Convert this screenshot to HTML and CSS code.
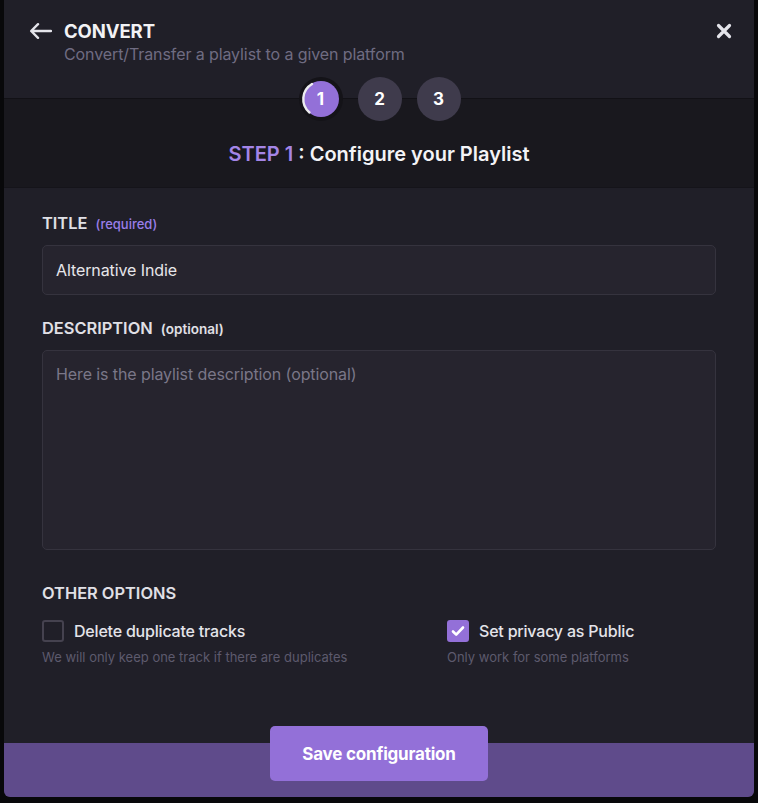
FILE: index.html
```html
<!DOCTYPE html>
<html>
<head>
<meta charset="utf-8">
<link rel="stylesheet" href="styles.css">
</head>
<body>
<div class="modal">
  <header class="head">
    <svg class="back" width="24" height="24" viewBox="0 0 24 24"><path d="M23 12H3.5M10 5.2L3.2 12l6.8 6.8" fill="none" stroke="#e4e4ea" stroke-width="2.4" stroke-linecap="round" stroke-linejoin="round"/></svg>
    <div class="titles">
      <div class="h-title">CONVERT</div>
      <div class="h-sub">Convert/Transfer a playlist to a given platform</div>
    </div>
    <svg class="close" width="16" height="16" viewBox="0 0 16 16"><path d="M2.5 2.5l11 11M13.5 2.5l-11 11" stroke="#e4e4ea" stroke-width="3.2" stroke-linecap="round"/></svg>
  </header>
  <section class="stepband">
    <div class="steps">
      <div class="step active"><span class="dot">1</span>
        <svg class="arc" width="44" height="44" viewBox="0 0 44 44"><path d="M13 7 A17.5 17.5 0 0 0 10.5 35.5" fill="none" stroke="#ececf0" stroke-width="2.4" stroke-linecap="round"/></svg>
      </div>
      <div class="step">2</div>
      <div class="step">3</div>
    </div>
    <h2 class="steptitle"><span class="accent">STEP 1</span> : Configure your Playlist</h2>
  </section>
  <main class="form">
    <label class="lbl">TITLE <span class="req">(required)</span></label>
    <div class="input">Alternative Indie</div>
    <label class="lbl lbl2">DESCRIPTION <span class="opt">(optional)</span></label>
    <div class="textarea">Here is the playlist description (optional)</div>
    <div class="lbl lbl3">OTHER OPTIONS</div>
    <div class="options">
      <div class="option">
        <div class="check-row"><span class="box"></span><span class="ctext">Delete duplicate tracks</span></div>
        <div class="hint">We will only keep one track if there are duplicates</div>
      </div>
      <div class="option">
        <div class="check-row"><span class="box checked"><svg width="14" height="12" viewBox="0 0 14 12"><path d="M2 6.5l3.2 3.2L12 2.5" fill="none" stroke="#fff" stroke-width="2.6" stroke-linecap="round" stroke-linejoin="round"/></svg></span><span class="ctext">Set privacy as Public</span></div>
        <div class="hint">Only work for some platforms</div>
      </div>
    </div>
  </main>
  <footer class="foot">
    <button class="save">Save configuration</button>
  </footer>
</div>
</body>
</html>
```
FILE: styles.css
```css
* { box-sizing: border-box; }
html, body { margin: 0; padding: 0; }
body {
  background: #08080a;
  font-family: Inter, "Noto Sans", sans-serif;
  width: 758px;
  height: 803px;
  overflow: hidden;
}
.modal {
  margin-left: 4px;
  width: 750px;
  height: 797px;
  background: #201f28;
  border-radius: 0 0 6px 6px;
  overflow: hidden;
  display: flex;
  flex-direction: column;
}
.head {
  height: 99px;
  display: flex;
  align-items: flex-start;
  padding: 19px 22px 0 24px;
  border-bottom: 1px solid #121116;
  flex-shrink: 0;
}
.back { flex-shrink: 0; }
.titles { margin-left: 12px; flex: 1; }
.h-title {
  color: #f2f2f5;
  font-size: 18.5px;
  font-weight: 700;
  line-height: 24px;
  letter-spacing: -0.1px;
}
.h-sub {
  color: #6f6c82;
  font-size: 16px;
  line-height: 22px;
  letter-spacing: -0.1px;
}
.close { margin-top: 4px; }
.stepband {
  background: #19181e;
  height: 89px;
  border-bottom: 1px solid #15141a;
  flex-shrink: 0;
}
.steps {
  display: flex;
  justify-content: center;
  gap: 15px;
  margin-top: -22px;
  padding-left: 1px;
}
.step {
  width: 44px;
  height: 44px;
  border-radius: 50%;
  background: #3f3b4c;
  color: #fff;
  font-weight: 700;
  font-size: 17px;
  display: flex;
  align-items: center;
  justify-content: center;
  position: relative;
}
.step.active { background: #141318; }
.step .dot {
  width: 36px;
  height: 36px;
  border-radius: 50%;
  background: #9370d8;
  display: flex;
  align-items: center;
  justify-content: center;
}
.step .arc { position: absolute; left: 0; top: 0; }
.steptitle {
  margin: 20px 0 0;
  text-align: center;
  color: #f3f3f6;
  font-size: 20px;
  font-weight: 600;
  line-height: 26px;
}
.accent { color: #a485e6; }
.form {
  flex: 1;
  padding: 24px 38px 0 38px;
}
.lbl {
  display: block;
  color: #e0e0e6;
  font-size: 16.4px;
  font-weight: 600;
  line-height: 22px;
}
.req { color: #9a7ee8; font-size: 13px; font-weight: 500; margin-left: 4px; }
.opt { color: #e0e0e6; font-size: 13.5px; font-weight: 600; margin-left: 4px; }
.input {
  margin-top: 10px;
  height: 50px;
  background: #26242e;
  border: 1px solid #35333e;
  border-radius: 5px;
  color: #e6e6ea;
  font-size: 16px;
  padding: 0 13px;
  display: flex;
  align-items: center;
  letter-spacing: -0.1px;
}
.lbl2 { margin-top: 22px; }
.textarea {
  margin-top: 10px;
  height: 200px;
  background: #26242e;
  border: 1px solid #35333e;
  border-radius: 5px;
  color: #7a7788;
  font-size: 16px;
  padding: 12px 13px;
  line-height: 22px;
  letter-spacing: -0.1px;
}
.lbl3 { margin-top: 32px; }
.options {
  margin-top: 16px;
  display: grid;
  grid-template-columns: 405px 1fr;
}
.check-row { display: flex; align-items: center; gap: 10px; }
.box {
  width: 22px;
  height: 22px;
  border: 2px solid #45424f;
  border-radius: 3px;
  display: flex;
  align-items: center;
  justify-content: center;
}
.box.checked { background: #9370d8; border-color: #9370d8; }
.ctext { color: #e4e4ea; font-size: 16px; font-weight: 500; line-height: 22px; letter-spacing: -0.2px; }
.hint { color: #5d5a6d; font-size: 13px; margin-top: 6px; line-height: 18px; }
.foot {
  height: 54px;
  background: #5f4b8b;
  display: flex;
  justify-content: center;
  flex-shrink: 0;
}
.save {
  margin-top: -17px;
  width: 218px;
  height: 55px;
  background: #9370d8;
  color: #fff;
  border: none;
  border-radius: 5px;
  font-family: Inter, sans-serif;
  font-size: 17px;
  font-weight: 700;
  letter-spacing: -0.2px;
}
```
